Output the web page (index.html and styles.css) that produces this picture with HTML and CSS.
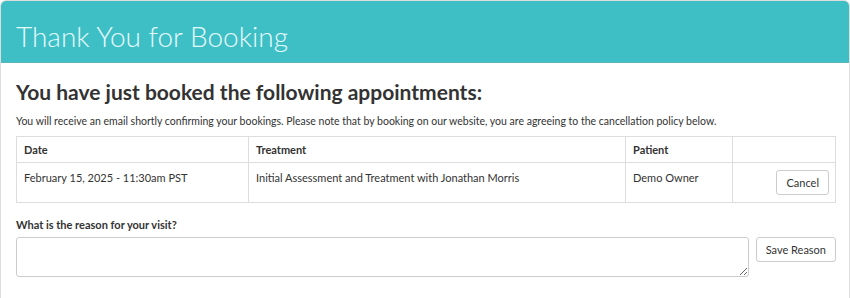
FILE: index.html
```html
<!DOCTYPE html>
<html>
<head>
	<title>Thank You for Booking</title>
	<link rel="stylesheet" href="styles.css">
</head>
<body>
	<div class="panel">
		<div class="panel-heading">
			<h1>Thank You for Booking</h1>
		</div>
		<div class="panel-body">
			<h2>You have just booked the following appointments:</h2>
			<p class="note">You will receive an email shortly confirming your bookings. Please note that by booking on our website, you are agreeing to the cancellation policy below.</p>

			<table class="bookings">
				<thead>
					<tr>
						<th class="col-date">Date</th>
						<th class="col-treatment">Treatment</th>
						<th class="col-patient">Patient</th>
						<th class="col-action"></th>
					</tr>
				</thead>
				<tbody>
					<tr>
						<td>February 15, 2025 - 11:30am PST</td>
						<td>Initial Assessment and Treatment with Jonathan Morris</td>
						<td>Demo Owner</td>
						<td class="action"><button class="btn">Cancel</button></td>
					</tr>
				</tbody>
			</table>

			<label for="reason" class="reason-label">What is the reason for your visit?</label>
			<div class="reason-row">
				<textarea id="reason"></textarea>
				<button class="btn">Save Reason</button>
			</div>
		</div>
	</div>
</body>
</html>
```

FILE: styles.css
```css
body {
	margin: 0;
	font-family: 'Lato', 'Liberation Sans', sans-serif;
	color: #333;
	background-color: #fff;
}
.panel {
	border: 1px solid #ddd;
	border-bottom: none;
	border-radius: 6px 6px 0 0;
	height: 297px;
	overflow: hidden;
}
.panel-heading {
	background-color: #3ebfc6;
	height: 61px;
	padding: 0 15px;
	border-bottom: 1px solid #5bb5bb;
}
.panel-heading h1 {
	margin: 0;
	padding-top: 18px;
	font-size: 28px;
	font-weight: 300;
	line-height: 34px;
	color: #e6f9fa;
}
.panel-body {
	padding: 0 13px 0 15px;
}
h2 {
	margin: 17px 0 0 0;
	font-size: 21px;
	font-weight: 700;
	line-height: 24px;
	color: #333;
}
.note {
	margin: 9px 0 7px 0;
	font-size: 10.5px;
	line-height: 16px;
}
.bookings {
	width: 100%;
	border-collapse: collapse;
	font-size: 11px;
}
.bookings th, .bookings td {
	border: 1px solid #ddd;
	text-align: left;
	vertical-align: top;
	padding: 6px 7px;
	line-height: 13px;
}
.bookings th {
	font-weight: 700;
	height: 13px;
}
.bookings td {
	padding-top: 8px;
	height: 25px;
}
.col-date { width: 217px; }
.col-treatment { width: 362px; }
.col-patient { width: 92px; }
.bookings td.action {
	text-align: right;
	padding: 7px 6px 0 0;
}
.btn {
	font-family: inherit;
	font-size: 11px;
	color: #333;
	background-color: #fff;
	border: 1px solid #ccc;
	border-radius: 3px;
	padding: 5px 9px;
	line-height: 13px;
	cursor: pointer;
}
.reason-label {
	display: block;
	margin-top: 15px;
	font-size: 11px;
	font-weight: 700;
	line-height: 14px;
}
.reason-row {
	display: flex;
	align-items: flex-start;
	gap: 7px;
	margin-top: 5px;
}
.reason-row textarea {
	flex: 1;
	height: 36px;
	border: 1px solid #ccc;
	border-radius: 3px;
	padding: 1px;
	font-family: inherit;
}
```
